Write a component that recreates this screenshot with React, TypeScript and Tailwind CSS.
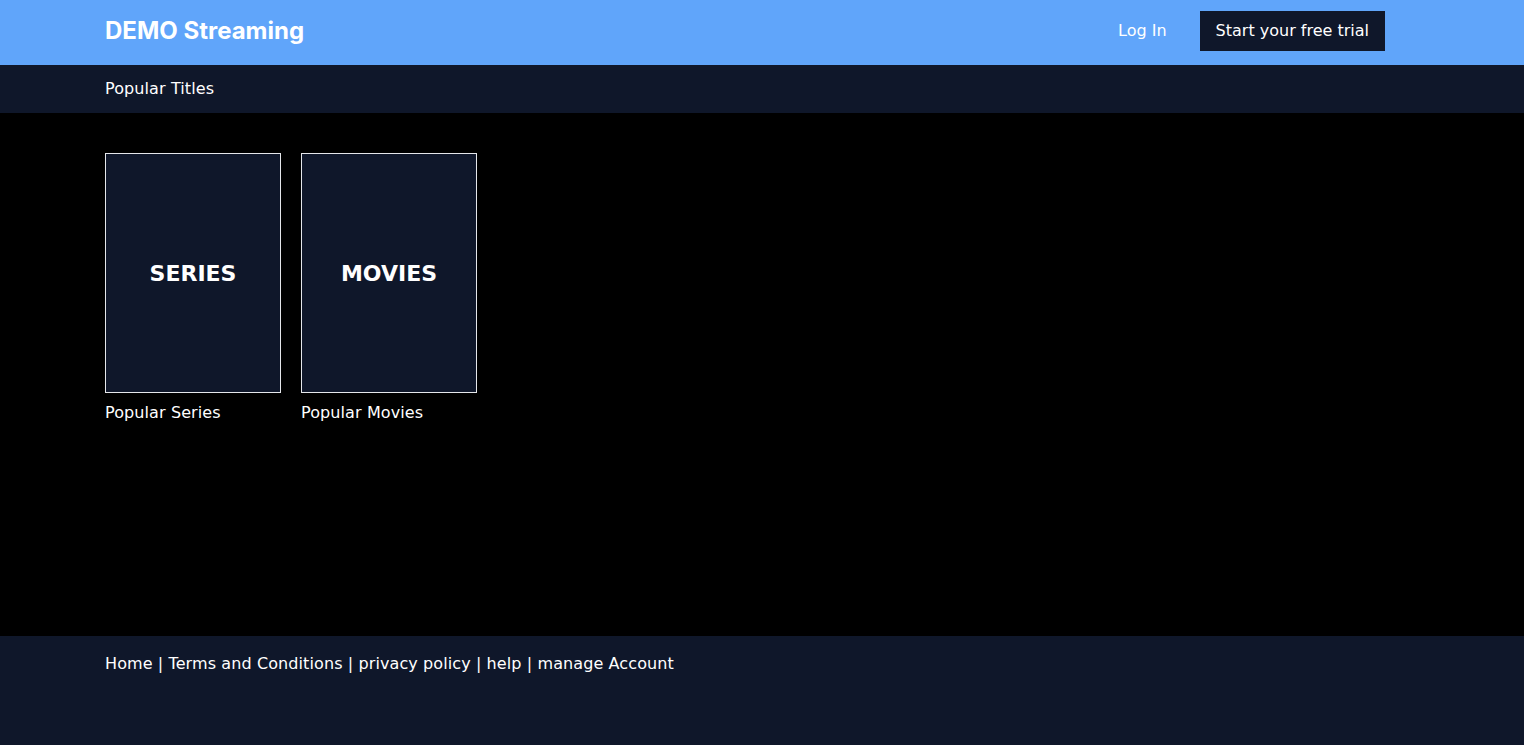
const tiles = [
  { title: "SERIES", label: "Popular Series" },
  { title: "MOVIES", label: "Popular Movies" },
];

const links = ["Home", "Terms and Conditions", "privacy policy", "help", "manage Account"];

export default function App() {
  return (
    <div className="min-h-screen flex flex-col bg-black text-white font-['DejaVu_Sans',sans-serif]">
      <header className="h-[65px] bg-[#60a5fa] pl-[105px] pr-[139px] pb-[3px] flex items-center justify-between">
        <h1 className="font-['Inter',sans-serif] text-2xl font-bold">DEMO Streaming</h1>
        <div className="flex items-center gap-[33px] text-base">
          <a href="#" className="text-white">Log In</a>
          <button className="bg-[#0f172a] px-4 h-10 text-white">Start your free trial</button>
        </div>
      </header>

      <div className="h-12 bg-[#0f172a] pl-[105px] flex items-center">
        <h2 className="text-base tracking-[0.1px]">Popular Titles</h2>
      </div>

      <main className="h-[523px] pl-[105px] pt-10">
        <div className="flex gap-5">
          {tiles.map((t) => (
            <div key={t.title} className="w-[176px]">
              <div className="h-[240px] border border-[#e5e7eb] bg-[#0f172a] flex items-center justify-center">
                <span className="text-[22px] font-bold">{t.title}</span>
              </div>
              <p className="mt-2 text-base tracking-[0.1px]">{t.label}</p>
            </div>
          ))}
        </div>
      </main>

      <footer className="flex-1 bg-[#0f172a] pl-[105px] pt-4">
        <p className="text-base tracking-[0.1px]">{links.join(" | ")}</p>
      </footer>
    </div>
  );
}
